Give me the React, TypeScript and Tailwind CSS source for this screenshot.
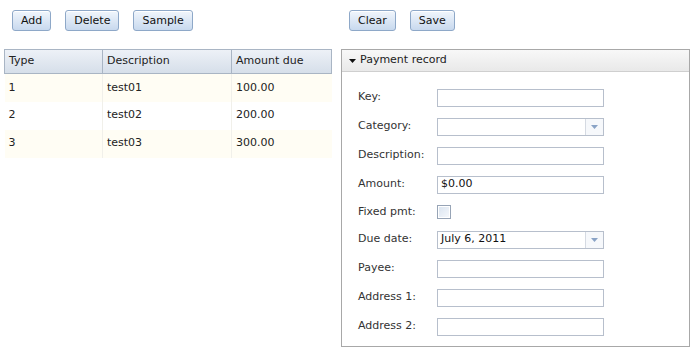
const rows = [
  { type: '1', description: 'test01', amount: '100.00' },
  { type: '2', description: 'test02', amount: '200.00' },
  { type: '3', description: 'test03', amount: '300.00' },
]

function Button({ label }: { label: string }) {
  return (
    <button className="h-[21px] rounded-[3px] border border-[#8ea8c8] bg-gradient-to-b from-[#f1f6fc] to-[#c8d9ee] px-[8px] text-[11px] leading-none text-[#111] shadow-[inset_0_1px_0_#ffffff]">
      {label}
    </button>
  )
}

function TextBox({ value }: { value?: string }) {
  return (
    <div className="flex h-[18px] w-[167px] items-center border border-[#b7bfcc] bg-white px-[3px] text-[11px] text-[#111]">
      {value}
    </div>
  )
}

function ComboBox({ value }: { value?: string }) {
  return (
    <div className="flex h-[18px] w-[167px] border border-[#b7bfcc] bg-white text-[11px] text-[#111]">
      <div className="flex flex-1 items-center px-[3px]">{value}</div>
      <div className="flex w-[18px] items-center justify-center border-l border-[#d5dae2] bg-[#f6f8fb]">
        <svg width="7" height="4" viewBox="0 0 7 4">
          <path d="M0 0H7L3.5 4Z" fill="#8aa3c6" />
        </svg>
      </div>
    </div>
  )
}

function Field({ label, children, tall = true }: { label: string; children: React.ReactNode; tall?: boolean }) {
  return (
    <div className={`flex items-center ${tall ? 'h-[29px]' : 'h-[26px]'}`}>
      <div className="w-[79px] text-[11px] text-[#333]">{label}</div>
      {children}
    </div>
  )
}

export default function App() {
  return (
    <div className="flex h-[357px] w-[694px] gap-[10px] bg-white pl-[4px] font-['DejaVu_Sans',sans-serif] text-[11px] text-[#222]">
      <div className="w-[327px]">
        <div className="flex gap-[14px] pl-[8px] pt-[10px]">
          <Button label="Add" />
          <Button label="Delete" />
          <Button label="Sample" />
        </div>

        <table className="mt-[18px] w-[327px] table-fixed border-collapse">
          <colgroup>
            <col className="w-[98px]" />
            <col className="w-[129px]" />
            <col className="w-[100px]" />
          </colgroup>
          <thead>
            <tr className="h-[24px] bg-gradient-to-b from-[#edf1f7] to-[#d5dee9]">
              <th className="border border-[#a9b5c4] px-[4px] text-left font-normal">Type</th>
              <th className="border border-[#a9b5c4] px-[4px] text-left font-normal">Description</th>
              <th className="border border-[#a9b5c4] px-[4px] text-left font-normal">Amount due</th>
            </tr>
          </thead>
          <tbody>
            {rows.map((row, i) => (
              <tr key={row.type} className={`h-[28px] ${i % 2 === 0 ? 'bg-[#fffdf4]' : 'bg-white'}`}>
                <td className="border-r border-[#f1f0ea] px-[4px]">{row.type}</td>
                <td className="border-r border-[#f1f0ea] px-[4px]">{row.description}</td>
                <td className="px-[4px]">{row.amount}</td>
              </tr>
            ))}
          </tbody>
        </table>
      </div>

      <div className="w-[349px]">
        <div className="flex gap-[14px] pl-[8px] pt-[10px]">
          <Button label="Clear" />
          <Button label="Save" />
        </div>

        <div className="mt-[18px] border border-[#a8a8a8]">
          <div className="flex h-[22px] items-center gap-[4px] border-b border-[#cfcfcf] bg-gradient-to-b from-[#f8f8f8] to-[#e9e9e9] pl-[7px] text-[#222]">
            <svg width="7" height="4" viewBox="0 0 7 4">
              <path d="M0 0H7L3.5 4Z" fill="#111" />
            </svg>
            <span>Payment record</span>
          </div>

          <div className="pb-[5px] pl-[16px] pt-[11px]">
            <Field label="Key:">
              <TextBox />
            </Field>
            <Field label="Category:">
              <ComboBox />
            </Field>
            <Field label="Description:">
              <TextBox />
            </Field>
            <Field label="Amount:">
              <TextBox value="$0.00" />
            </Field>
            <Field label="Fixed pmt:" tall={false}>
              <div className="h-[14px] w-[14px] border border-[#97a4b6] bg-gradient-to-br from-[#d9e3ef] to-[#f7f9fc] shadow-[inset_0_0_0_1px_#ffffff]" />
            </Field>
            <Field label="Due date:">
              <ComboBox value="July 6, 2011" />
            </Field>
            <Field label="Payee:">
              <TextBox />
            </Field>
            <Field label="Address 1:">
              <TextBox />
            </Field>
            <Field label="Address 2:">
              <TextBox />
            </Field>
          </div>
        </div>
      </div>
    </div>
  )
}
